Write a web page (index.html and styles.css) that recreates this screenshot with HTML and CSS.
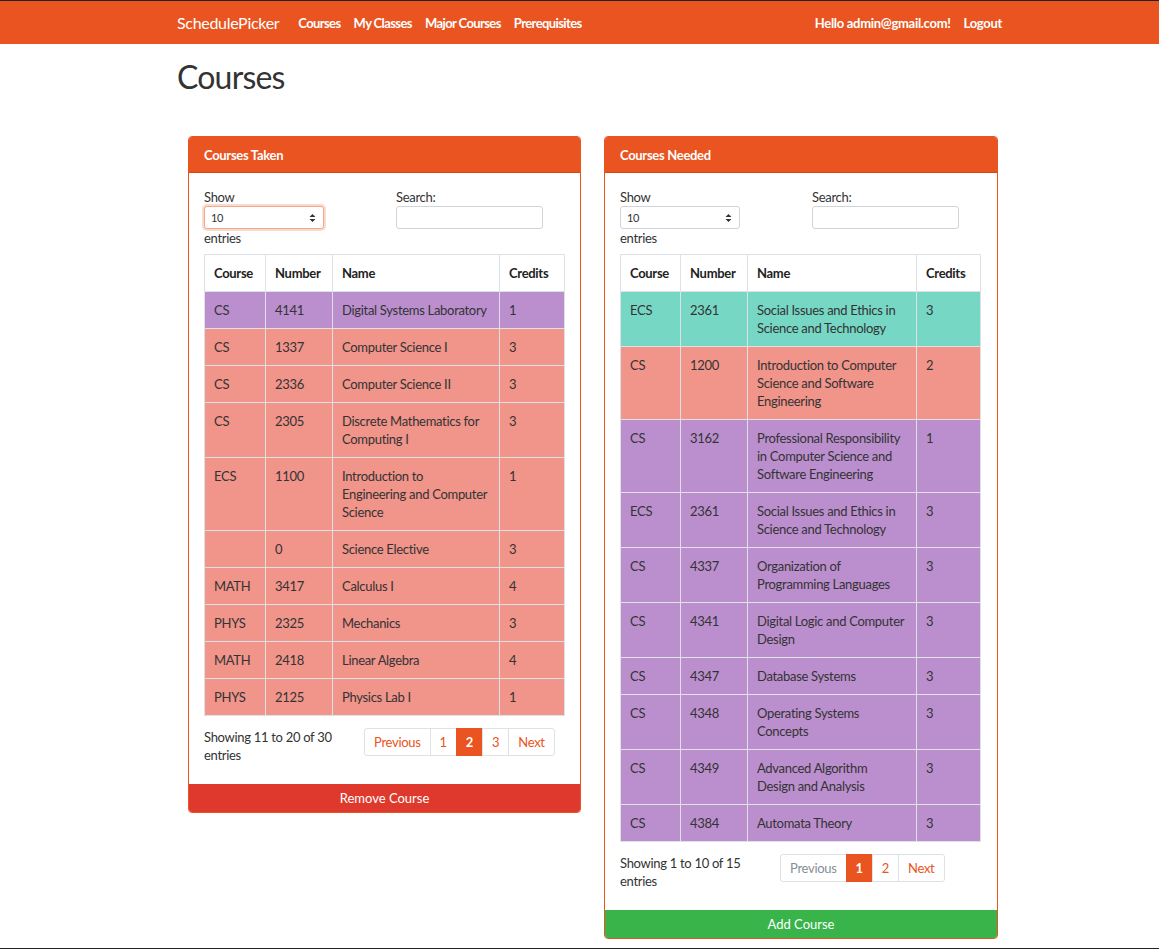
FILE: index.html
```html
<!DOCTYPE html>
<html lang="en">
<head>
<meta charset="utf-8">
<title>Courses - SchedulePicker</title>
<link rel="stylesheet" href="styles.css">
</head>
<body>
<nav class="navbar">
  <div class="nav-inner">
    <a class="brand" href="#">SchedulePicker</a>
    <ul class="nav-links">
      <li><a href="#">Courses</a></li>
      <li><a href="#">My Classes</a></li>
      <li><a href="#">Major Courses</a></li>
      <li><a href="#">Prerequisites</a></li>
    </ul>
    <div class="nav-right">
      <span class="hello">Hello admin@gmail.com!</span>
      <a href="#">Logout</a>
    </div>
  </div>
</nav>

<main class="container">
  <h1 class="page-title">Courses</h1>

  <div class="panels">
    <section class="panel panel-left">
      <div class="panel-heading">Courses Taken</div>
      <div class="panel-body">
        <div class="dt-top">
          <div class="dt-length">
            <div class="lbl">Show</div>
            <div class="select-box focused"><span>10</span>
              <svg class="sel-arrow" width="7" height="10" viewBox="0 0 7 10"><path d="M3.5 1 L6.5 4 H0.5 Z M3.5 9 L6.5 6 H0.5 Z" fill="#333"/></svg>
            </div>
            <div class="lbl">entries</div>
          </div>
          <div class="dt-filter">
            <div class="lbl">Search:</div>
            <input class="search-input" type="search">
          </div>
        </div>

        <table class="dt-table">
          <colgroup><col style="width:61px"><col style="width:67px"><col style="width:167px"><col style="width:65px"></colgroup>
          <thead><tr><th>Course</th><th>Number</th><th>Name</th><th>Credits</th></tr></thead>
          <tbody>
            <tr class="row-purple"><td>CS</td><td>4141</td><td>Digital Systems Laboratory</td><td>1</td></tr>
            <tr class="row-salmon"><td>CS</td><td>1337</td><td>Computer Science I</td><td>3</td></tr>
            <tr class="row-salmon"><td>CS</td><td>2336</td><td>Computer Science II</td><td>3</td></tr>
            <tr class="row-salmon"><td>CS</td><td>2305</td><td>Discrete Mathematics for Computing I</td><td>3</td></tr>
            <tr class="row-salmon"><td>ECS</td><td>1100</td><td>Introduction to Engineering and Computer Science</td><td>1</td></tr>
            <tr class="row-salmon"><td></td><td>0</td><td>Science Elective</td><td>3</td></tr>
            <tr class="row-salmon"><td>MATH</td><td>3417</td><td>Calculus I</td><td>4</td></tr>
            <tr class="row-salmon"><td>PHYS</td><td>2325</td><td>Mechanics</td><td>3</td></tr>
            <tr class="row-salmon"><td>MATH</td><td>2418</td><td>Linear Algebra</td><td>4</td></tr>
            <tr class="row-salmon"><td>PHYS</td><td>2125</td><td>Physics Lab I</td><td>1</td></tr>
          </tbody>
        </table>

        <div class="dt-bottom">
          <div class="dt-info">Showing 11 to 20 of 30 entries</div>
          <ul class="pagination">
            <li><a href="#">Previous</a></li>
            <li><a href="#">1</a></li>
            <li class="active"><a href="#">2</a></li>
            <li><a href="#">3</a></li>
            <li><a href="#">Next</a></li>
          </ul>
        </div>
      </div>
      <button class="btn btn-danger" type="button">Remove Course</button>
    </section>

    <section class="panel panel-right">
      <div class="panel-heading">Courses Needed</div>
      <div class="panel-body">
        <div class="dt-top">
          <div class="dt-length">
            <div class="lbl">Show</div>
            <div class="select-box"><span>10</span>
              <svg class="sel-arrow" width="7" height="10" viewBox="0 0 7 10"><path d="M3.5 1 L6.5 4 H0.5 Z M3.5 9 L6.5 6 H0.5 Z" fill="#333"/></svg>
            </div>
            <div class="lbl">entries</div>
          </div>
          <div class="dt-filter">
            <div class="lbl">Search:</div>
            <input class="search-input" type="search">
          </div>
        </div>

        <table class="dt-table">
          <colgroup><col style="width:60px"><col style="width:67px"><col style="width:169px"><col style="width:64px"></colgroup>
          <thead><tr><th>Course</th><th>Number</th><th>Name</th><th>Credits</th></tr></thead>
          <tbody>
            <tr class="row-teal"><td>ECS</td><td>2361</td><td>Social Issues and Ethics in Science and Technology</td><td>3</td></tr>
            <tr class="row-salmon"><td>CS</td><td>1200</td><td>Introduction to Computer Science and Software Engineering</td><td>2</td></tr>
            <tr class="row-purple"><td>CS</td><td>3162</td><td>Professional Responsibility in Computer Science and Software Engineering</td><td>1</td></tr>
            <tr class="row-purple"><td>ECS</td><td>2361</td><td>Social Issues and Ethics in Science and Technology</td><td>3</td></tr>
            <tr class="row-purple"><td>CS</td><td>4337</td><td>Organization of Programming Languages</td><td>3</td></tr>
            <tr class="row-purple"><td>CS</td><td>4341</td><td>Digital Logic and Computer Design</td><td>3</td></tr>
            <tr class="row-purple"><td>CS</td><td>4347</td><td>Database Systems</td><td>3</td></tr>
            <tr class="row-purple"><td>CS</td><td>4348</td><td>Operating Systems Concepts</td><td>3</td></tr>
            <tr class="row-purple"><td>CS</td><td>4349</td><td>Advanced Algorithm Design and Analysis</td><td>3</td></tr>
            <tr class="row-purple"><td>CS</td><td>4384</td><td>Automata Theory</td><td>3</td></tr>
          </tbody>
        </table>

        <div class="dt-bottom">
          <div class="dt-info">Showing 1 to 10 of 15 entries</div>
          <ul class="pagination">
            <li class="disabled"><a href="#">Previous</a></li>
            <li class="active"><a href="#">1</a></li>
            <li><a href="#">2</a></li>
            <li><a href="#">Next</a></li>
          </ul>
        </div>
      </div>
      <button class="btn btn-success" type="button">Add Course</button>
    </section>
  </div>
</main>
</body>
</html>
```

FILE: styles.css
```css
* { box-sizing: border-box; }

html { height: 100%; }

body {
  margin: 0;
  min-height: 100vh;
  font-family: Lato, "Liberation Sans", sans-serif;
  font-size: 13px;
  line-height: 18px;
  letter-spacing: -0.3px;
  color: #333;
  background: #fff;
  border-top: 1px solid #222;
  border-bottom: 1px solid #222;
}

a { text-decoration: none; color: inherit; }

/* Navbar */
.navbar {
  background: #e95420;
  height: 43px;
}
.nav-inner {
  margin-left: 177px;
  width: 825px;
  height: 100%;
  display: flex;
  align-items: center;
  color: #fff;
}
.brand {
  font-size: 16px;
  margin-right: 19px;
  color: #fff;
}
.nav-links {
  list-style: none;
  margin: 0;
  padding: 0;
  display: flex;
  gap: 13px;
}
.nav-links a {
  color: #fff;
  font-weight: 700;
  letter-spacing: -0.6px;
}
.nav-right {
  margin-left: auto;
  display: flex;
  gap: 13px;
  font-weight: 700;
}

/* Main */
.container {
  margin-left: 177px;
  width: 825px;
}
.page-title {
  font-size: 32px;
  font-weight: 400;
  line-height: 35px;
  letter-spacing: -0.8px;
  margin: 15px 0 0;
  color: #333;
}
.panels {
  margin: 42px 0 0 11px;
  display: grid;
  grid-template-columns: 393px 394px;
  column-gap: 23px;
  align-items: start;
}
.panel {
  border: 1px solid #e95420;
  border-radius: 4px;
  overflow: hidden;
  background: #fff;
}
.panel-heading {
  background: #e95420;
  color: #fff;
  font-weight: 700;
  height: 36px;
  line-height: 36px;
  padding: 0 15px;
  border-bottom: 1px solid #d34615;
}
.panel-body {
  padding: 15px 15px 20px;
}

.dt-top {
  display: grid;
  grid-template-columns: 192px 1fr;
}
.select-box {
  width: 120px;
  height: 23px;
  border: 1px solid #ced4da;
  border-radius: 3px;
  font-size: 11px;
  padding-left: 6px;
  display: flex;
  align-items: center;
  justify-content: space-between;
  padding-right: 7px;
  background: #fff;
}
.select-box.focused {
  border-color: #f5a889;
  box-shadow: 0 0 0 2px rgba(233, 84, 32, 0.22);
}
.search-input {
  display: block;
  width: 147px;
  height: 23px;
  border: 1px solid #ced4da;
  border-radius: 3px;
  margin: 0;
  padding: 0 6px;
  font: inherit;
  background: #fff;
}

/* Table */
.dt-table {
  margin-top: 7px;
  width: 360px;
  table-layout: fixed;
  border-collapse: collapse;
}
.dt-table th,
.dt-table td {
  border: 1px solid #dee2e6;
  padding: 9px 9px;
  text-align: left;
  vertical-align: top;
  line-height: 18px;
}
.dt-table th {
  font-weight: 700;
  color: #222;
  background: #fff;
}
.row-purple td { background: #bb8fce; }
.row-salmon td { background: #f1948a; }
.row-teal td { background: #76d7c4; }

/* Bottom */
.dt-bottom {
  margin-top: 12px;
  display: grid;
  grid-template-columns: 160px 1fr;
}
.dt-info {
  padding-right: 10px;
}
.pagination {
  list-style: none;
  margin: 0;
  padding: 0;
  display: flex;
}
.pagination li a {
  display: block;
  height: 28px;
  line-height: 26px;
  padding: 0 9px;
  border: 1px solid #dee2e6;
  margin-left: -1px;
  color: #e95420;
  background: #fff;
}
.pagination li:first-child a {
  margin-left: 0;
  border-radius: 3px 0 0 3px;
}
.pagination li:last-child a {
  border-radius: 0 3px 3px 0;
}
.pagination li.active a {
  background: #e95420;
  border-color: #e95420;
  color: #fff;
  font-weight: 700;
}
.pagination li.disabled a {
  color: #868e96;
}

/* Buttons */
.btn {
  display: block;
  width: 100%;
  height: 28px;
  border: 0;
  margin: 0;
  padding: 0;
  font: inherit;
  color: #fff;
  text-align: center;
  cursor: pointer;
}
.btn-danger { background: #df382c; }
.btn-success { background: #38b44a; }
```
